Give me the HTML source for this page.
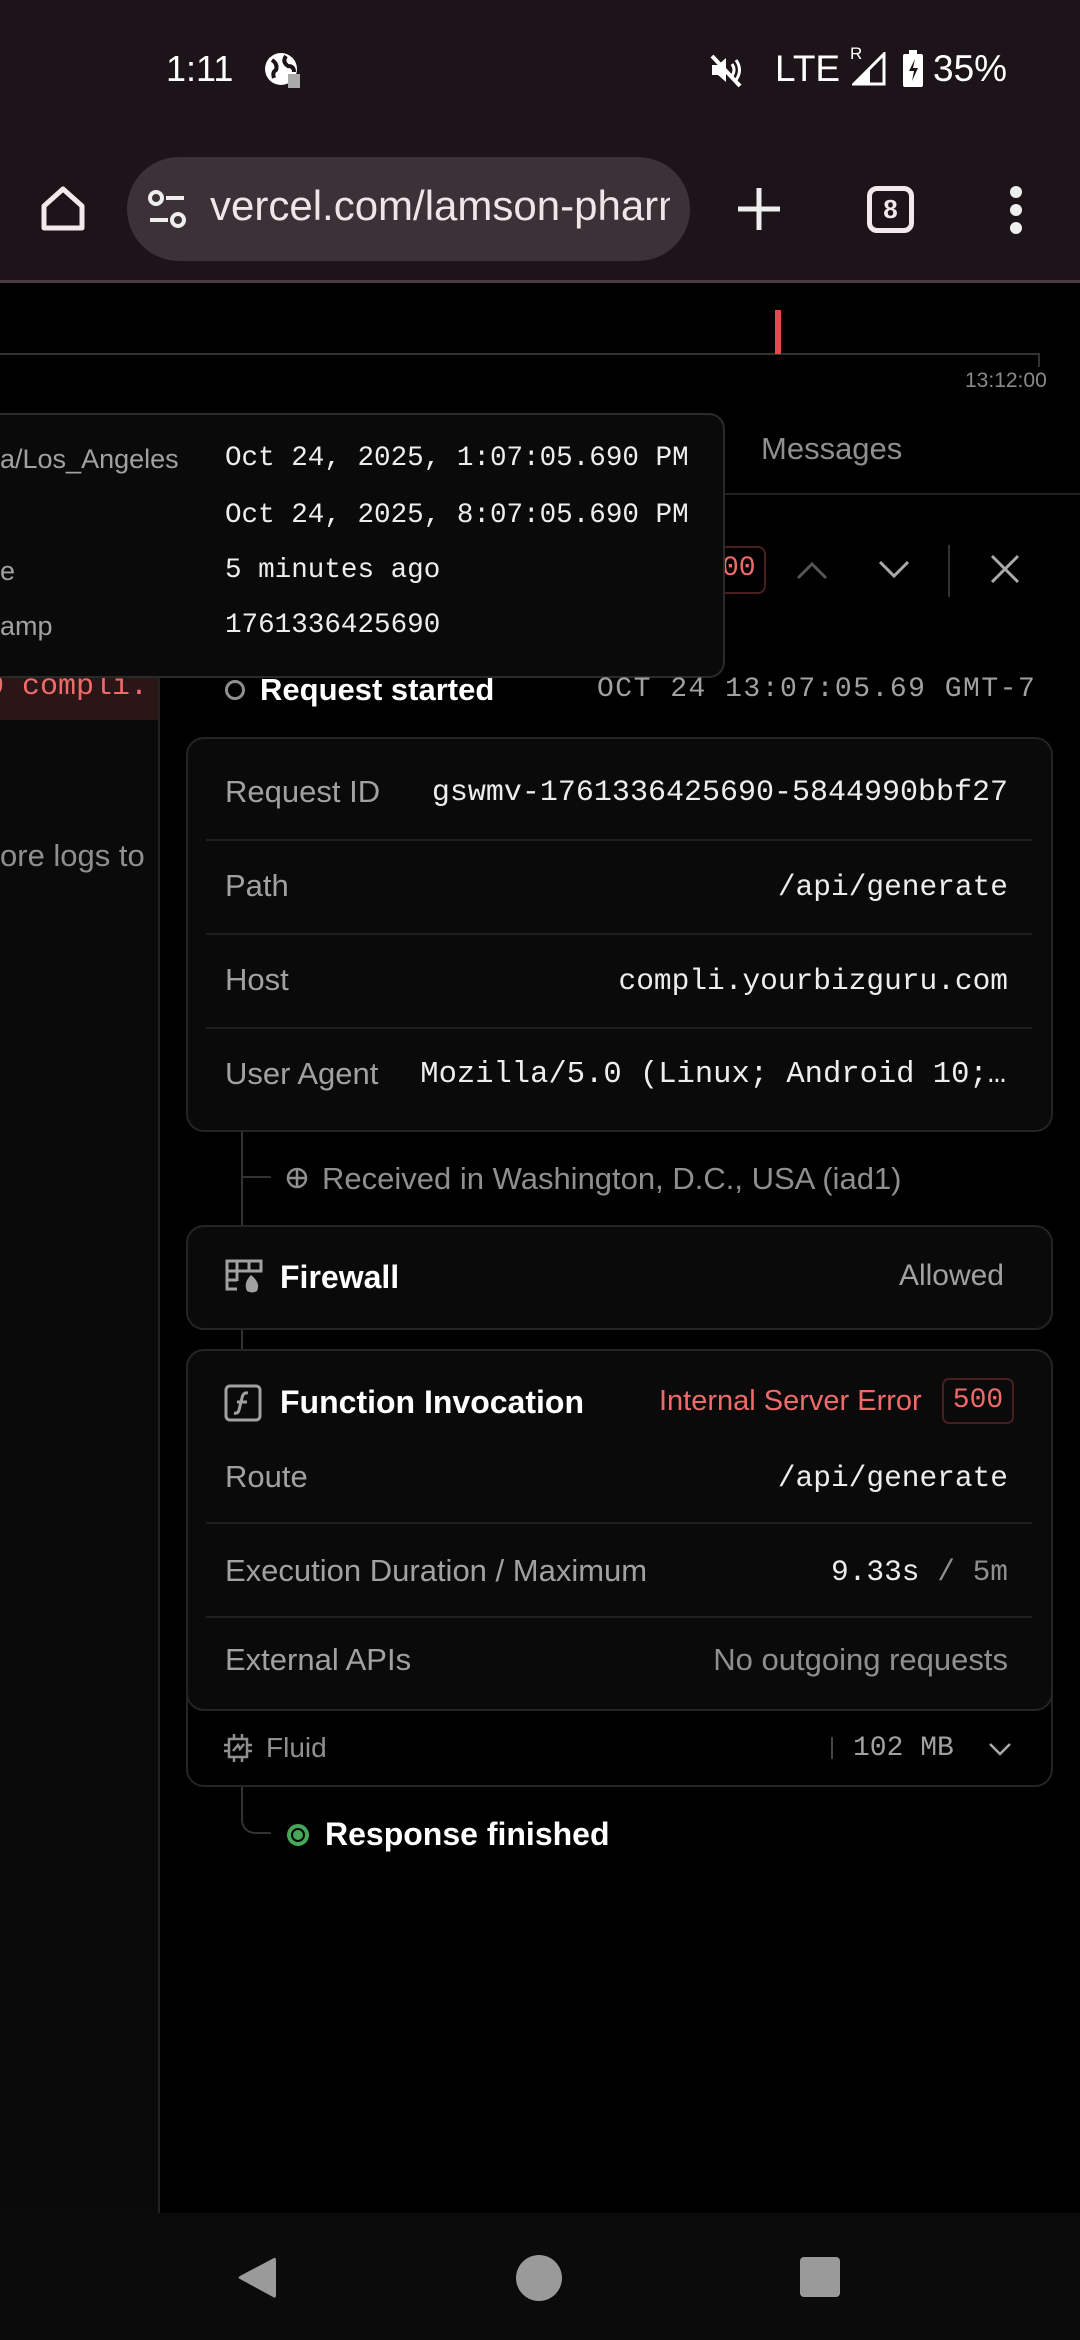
<!DOCTYPE html>
<html><head><meta charset="utf-8"><style>
*{margin:0;padding:0;box-sizing:border-box}
body{width:1080px;height:2340px;background:#000;position:relative;overflow:hidden;font-family:"Liberation Sans",sans-serif;color:#ededed}
.a{position:absolute;white-space:nowrap}
.mono{font-family:"Liberation Mono",monospace}
.lbl{font-size:31px;color:#a1a1a1}
.val{font-size:29.5px;color:#ededed;font-family:"Liberation Mono",monospace}
.card{position:absolute;background:#0a0a0a;border:2px solid #242424;border-radius:18px}
.hr{position:absolute;height:2px;background:#1f1f1f}
</style></head><body>
<div class="a" style="left:0;top:0;width:1080px;height:280px;background:#1c1418"></div>
<div class="a" style="left:0;top:280px;width:1080px;height:3px;background:#4a3c42"></div>
<div class="a" style="left:166px;top:48px;font-size:36px;color:#fff">1:11</div>
<svg class="a" style="left:262px;top:50px" width="40" height="40" viewBox="0 0 40 40"><circle cx="19" cy="19" r="16" fill="#fff"/><path d="M10 10 q6 4 4 10 q-4 2 -2 8 M24 6 q-4 6 2 10 q6 0 6 6" stroke="#1c1418" stroke-width="4" fill="none"/><rect x="26" y="24" width="12" height="14" fill="#aaa"/></svg>
<svg class="a" style="left:708px;top:52px" width="36" height="36" viewBox="0 0 36 36"><path d="M4 13h6l8-7v24l-8-7H4z" fill="#fff"/><path d="M24 12q4 6 0 12M28 8q7 10 0 20" stroke="#fff" stroke-width="3" fill="none"/><path d="M4 4l28 30" stroke="#fff" stroke-width="4"/></svg>
<div class="a" style="left:775px;top:48px;font-size:37px;color:#fff">LTE</div>
<div class="a" style="left:850px;top:44px;font-size:17px;color:#fff">R</div>
<svg class="a" style="left:852px;top:52px" width="34" height="34" viewBox="0 0 34 34"><path d="M2 32L32 2V32Z" fill="none" stroke="#fff" stroke-width="3"/><path d="M2 32L18 16V32Z" fill="#fff"/></svg>
<svg class="a" style="left:902px;top:50px" width="22" height="38" viewBox="0 0 22 38"><rect x="7" y="0" width="8" height="4" fill="#fff"/><rect x="1" y="4" width="20" height="33" rx="2" fill="#fff"/><path d="M13 9l-6 12h5l-2 10 6-13h-5z" fill="#1c1418"/></svg>
<div class="a" style="left:933px;top:48px;font-size:37px;color:#fff">35%</div>
<svg class="a" style="left:38px;top:184px" width="50" height="50" viewBox="0 0 50 50"><path d="M6 22L25 5l19 17v22H6z" fill="none" stroke="#f3e8ec" stroke-width="5" stroke-linejoin="round"/></svg>
<div class="a" style="left:127px;top:157px;width:563px;height:104px;border-radius:52px;background:#3b3136"></div>
<svg class="a" style="left:146px;top:190px" width="44" height="40" viewBox="0 0 44 40"><circle cx="10" cy="8" r="6" fill="none" stroke="#eee" stroke-width="4"/><path d="M20 8h18M4 30h18" stroke="#eee" stroke-width="4"/><circle cx="32" cy="30" r="6" fill="none" stroke="#eee" stroke-width="4"/></svg>
<div class="a" style="left:210px;top:182px;width:460px;overflow:hidden;font-size:42px;color:#efe6ea">vercel.com/lamson-pharma</div>
<svg class="a" style="left:736px;top:186px" width="46" height="46" viewBox="0 0 46 46"><path d="M23 2v42M2 23h42" stroke="#eee" stroke-width="5"/></svg>
<div class="a" style="left:867px;top:186px;width:47px;height:47px;border:5px solid #f3e8ec;border-radius:10px;font-size:26px;font-weight:bold;text-align:center;line-height:37px;color:#f3e8ec">8</div>
<div class="a" style="left:1010px;top:186px;width:12px;height:12px;border-radius:6px;background:#eee"></div>
<div class="a" style="left:1010px;top:204px;width:12px;height:12px;border-radius:6px;background:#eee"></div>
<div class="a" style="left:1010px;top:222px;width:12px;height:12px;border-radius:6px;background:#eee"></div>
<div class="a" style="left:0;top:353px;width:1040px;height:2px;background:#333"></div>
<div class="a" style="left:1038px;top:353px;width:2px;height:14px;background:#333"></div>
<div class="a" style="left:775px;top:310px;width:6px;height:44px;background:#e5484d"></div>
<div class="a" style="left:965px;top:369px;font-size:21px;color:#8a8a8a">13:12:00</div>
<div class="a" style="left:0;top:413px;width:160px;height:1800px;background:#0a0a0a;border-right:2px solid #222"></div>
<div class="a" style="left:0;top:678px;width:158px;height:42px;background:#2a1616"></div>
<div class="a mono" style="left:-14px;top:670px;font-size:30px;color:#f06a6a">0  compli.</div>
<div class="a" style="left:0;top:838px;font-size:31px;color:#8f8f8f">ore logs to</div>
<div class="a" style="left:761px;top:431px;font-size:31px;color:#8f8f8f">Messages</div>
<div class="a" style="left:724px;top:493px;width:356px;height:2px;background:#222"></div>
<div class="a" style="left:700px;top:546px;width:66px;height:48px;border:2px solid #4a1e1e;border-radius:8px"></div>
<div class="a mono" style="left:722px;top:553px;font-size:28px;color:#f06a6a">00</div>
<svg class="a" style="left:796px;top:560px" width="32" height="20" viewBox="0 0 32 20"><path d="M2 18L16 4l14 14" stroke="#555" stroke-width="3" fill="none"/></svg>
<svg class="a" style="left:878px;top:560px" width="32" height="20" viewBox="0 0 32 20"><path d="M2 2l14 14L30 2" stroke="#aaa" stroke-width="3" fill="none"/></svg>
<div class="a" style="left:948px;top:545px;width:2px;height:52px;background:#333"></div>
<svg class="a" style="left:990px;top:554px" width="30" height="30" viewBox="0 0 30 30"><path d="M2 2l26 26M28 2L2 28" stroke="#aaa" stroke-width="3"/></svg>
<div class="a" style="left:-20px;top:413px;width:745px;height:265px;background:#0a0a0a;border:2px solid #2a2a2a;border-radius:16px"></div>
<div class="a" style="left:0;top:444px;font-size:27px;color:#a1a1a1">a/Los_Angeles</div>
<div class="a" style="left:0;top:556px;font-size:27px;color:#a1a1a1">e</div>
<div class="a" style="left:0;top:611px;font-size:27px;color:#a1a1a1">amp</div>
<div class="a mono" style="left:225px;top:443px;font-size:27.6px;color:#ededed">Oct 24, 2025, 1:07:05.690 PM</div>
<div class="a mono" style="left:225px;top:500px;font-size:27.6px;color:#ededed">Oct 24, 2025, 8:07:05.690 PM</div>
<div class="a mono" style="left:225px;top:555px;font-size:27.6px;color:#ededed">5 minutes ago</div>
<div class="a mono" style="left:225px;top:610px;font-size:27.6px;color:#ededed">1761336425690</div>
<div class="a" style="left:225px;top:680px;width:20px;height:20px;border:3px solid #8f8f8f;border-radius:50%"></div>
<div class="a" style="left:260px;top:672px;font-size:31px;font-weight:bold;color:#fff">Request started</div>
<div class="a mono" style="left:597px;top:674px;font-size:28px;color:#a1a1a1;letter-spacing:1.5px">OCT 24 13:07:05.69 GMT-7</div>
<div class="a" style="left:241px;top:1131px;width:2px;height:220px;background:#333"></div>
<div class="a" style="left:241px;top:1710px;width:2px;height:112px;background:#333"></div>
<div class="a" style="left:241px;top:1790px;width:30px;height:44px;border-left:2px solid #333;border-bottom:2px solid #333;border-bottom-left-radius:14px"></div>
<div class="a" style="left:241px;top:1176px;width:30px;height:2px;background:#333"></div>
<div class="card" style="left:186px;top:737px;width:867px;height:395px"></div>
<div class="a lbl" style="left:225px;top:774px">Request ID</div>
<div class="a val" style="right:72px;top:776px;font-size:30px">gswmv-1761336425690-5844990bbf27</div>
<div class="hr" style="left:206px;top:839px;width:826px"></div>
<div class="a lbl" style="left:225px;top:868px">Path</div>
<div class="a val" style="right:72px;top:870px">/api/generate</div>
<div class="hr" style="left:206px;top:933px;width:826px"></div>
<div class="a lbl" style="left:225px;top:962px">Host</div>
<div class="a val" style="right:72px;top:964px">compli.yourbizguru.com</div>
<div class="hr" style="left:206px;top:1027px;width:826px"></div>
<div class="a lbl" style="left:225px;top:1056px">User Agent</div>
<div class="a val" style="right:74px;top:1058px;font-size:30.5px">Mozilla/5.0 (Linux; Android 10;…</div>
<svg class="a" style="left:286px;top:1167px" width="22" height="22" viewBox="0 0 22 22"><circle cx="11" cy="11" r="9" fill="none" stroke="#8f8f8f" stroke-width="2.5"/><path d="M2 11h18M11 2v18" stroke="#8f8f8f" stroke-width="2.5"/></svg>
<div class="a" style="left:322px;top:1161px;font-size:31px;color:#8f8f8f">Received in Washington, D.C., USA (iad1)</div>
<div class="card" style="left:186px;top:1225px;width:867px;height:105px"></div>
<svg class="a" style="left:225px;top:1259px" width="38" height="36" viewBox="0 0 38 36"><path d="M2 2h34v10H2zM2 12v18h10M12 2v20M24 2v10M2 21h10" stroke="#a1a1a1" stroke-width="3" fill="none"/><path d="M26 16q-8 8 -4 16q5 3 10 0q4 -8 -6 -16z" fill="#a1a1a1"/></svg>
<div class="a" style="left:280px;top:1259px;font-size:32px;font-weight:bold;color:#fff">Firewall</div>
<div class="a" style="right:76px;top:1259px;font-size:30px;color:#a1a1a1">Allowed</div>
<div class="a" style="left:186px;top:1349px;width:867px;height:438px;border:2px solid #242424;border-radius:18px;background:#000"></div>
<div class="card" style="left:186px;top:1349px;width:867px;height:362px"></div>
<svg class="a" style="left:224px;top:1384px" width="38" height="38" viewBox="0 0 38 38"><rect x="2" y="2" width="34" height="34" rx="4" fill="none" stroke="#a1a1a1" stroke-width="3"/><path d="M24 9q-5 -1 -6 5l-3 12q-1 4 -5 3M13 18h10" stroke="#a1a1a1" stroke-width="3" fill="none"/></svg>
<div class="a" style="left:280px;top:1384px;font-size:32px;font-weight:bold;color:#fff">Function Invocation</div>
<div class="a" style="left:659px;top:1385px;font-size:29px;color:#f06a6a">Internal Server Error</div>
<div class="a mono" style="left:942px;top:1378px;width:72px;height:46px;border:2px solid #4a1e1e;border-radius:7px;font-size:28px;color:#f06a6a;text-align:center;line-height:42px">500</div>
<div class="a lbl" style="left:225px;top:1459px">Route</div>
<div class="a val" style="right:72px;top:1461px">/api/generate</div>
<div class="hr" style="left:206px;top:1522px;width:826px"></div>
<div class="a lbl" style="left:225px;top:1553px">Execution Duration / Maximum</div>
<div class="a val" style="right:72px;top:1555px">9.33s <span style="color:#8f8f8f">/ 5m</span></div>
<div class="hr" style="left:206px;top:1616px;width:826px"></div>
<div class="a lbl" style="left:225px;top:1642px">External APIs</div>
<div class="a" style="right:72px;top:1642px;font-size:31px;color:#8f8f8f">No outgoing requests</div>
<svg class="a" style="left:224px;top:1733px" width="28" height="30" viewBox="0 0 28 30"><rect x="5" y="6" width="18" height="18" fill="none" stroke="#8f8f8f" stroke-width="2.5"/><path d="M10 1v5M18 1v5M10 24v5M18 24v5M0 12h5M0 18h5M23 12h5M23 18h5M9 18l5-6 2 4 4-5" stroke="#8f8f8f" stroke-width="2.5" fill="none"/></svg>
<div class="a" style="left:266px;top:1732px;font-size:28px;color:#8f8f8f">Fluid</div>
<div class="a" style="left:831px;top:1737px;width:2px;height:22px;background:#444"></div>
<div class="a mono" style="left:853px;top:1733px;font-size:28px;color:#a1a1a1">102 MB</div>
<svg class="a" style="left:988px;top:1742px" width="24" height="14" viewBox="0 0 24 14"><path d="M2 2l10 10L22 2" stroke="#aaa" stroke-width="2.5" fill="none"/></svg>
<div class="a" style="left:287px;top:1824px;width:22px;height:22px;border:4px solid #46a758;border-radius:50%;background:#000"></div>
<div class="a" style="left:293px;top:1830px;width:10px;height:10px;border-radius:50%;background:#46a758"></div>
<div class="a" style="left:325px;top:1816px;font-size:32px;font-weight:bold;color:#fff">Response finished</div>
<div class="a" style="left:0;top:2213px;width:1080px;height:127px;background:#0b0b0b"></div>
<svg class="a" style="left:236px;top:2255px" width="42" height="46" viewBox="0 0 42 46"><path d="M38 3Q40 2 40 6V40Q40 44 37 42L4 24Q1 23 4 21Z" fill="#9a9a9a"/></svg>
<div class="a" style="left:516px;top:2255px;width:46px;height:46px;border-radius:50%;background:#9a9a9a"></div>
<div class="a" style="left:800px;top:2257px;width:40px;height:40px;border-radius:4px;background:#9a9a9a"></div>
</body></html>
